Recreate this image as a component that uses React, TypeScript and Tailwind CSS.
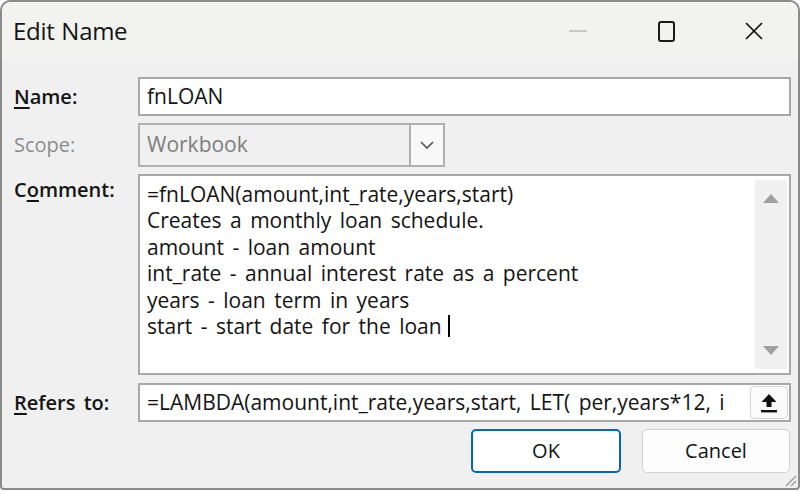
import { X } from "lucide-react"

const font = { fontFamily: '"Open Sans", "Noto Sans", sans-serif' }

const commentLines = [
    "=fnLOAN(amount,int_rate,years,start)",
    "Creates a monthly loan schedule.",
    "amount - loan amount",
    "int_rate - annual interest rate as a percent",
    "years - loan term in years",
    "start - start date for the loan",
]

export default function App() {
    return (
        <div className="w-[806px] h-[492px] bg-white overflow-hidden text-[#141414] [word-spacing:3px]" style={font}>
            <div className="w-[800px] h-[490px] bg-[#f0f0f0] border-2 border-[#8a8a8a] rounded-t-[10px] rounded-b-[4px] flex flex-col relative">
                {/* title bar */}
                <div className="h-[58px] flex items-center bg-[#f2f3ee] rounded-t-[10px]">
                    <span className="ml-[11px] text-[24px] tracking-[-0.3px] [word-spacing:1px]">Edit Name</span>
                    <div className="ml-auto flex items-center h-full">
                        <div className="w-[88px] h-full flex items-center justify-center">
                            <div className="w-[18px] h-[2px] bg-[#c8c8c8]" />
                        </div>
                        <div className="w-[88px] h-full flex items-center justify-center">
                            <div className="w-[17px] h-[21px] border-2 border-[#1a1a1a] rounded-[3px]" />
                        </div>
                        <div className="w-[88px] h-full flex items-center justify-center">
                            <X className="w-[30px] h-[30px]" strokeWidth={1.4} />
                        </div>
                    </div>
                </div>

                <div className="flex flex-col pl-[12px] pr-[7px] pt-[17px] text-[21px]">
                    {/* name */}
                    <div className="flex items-center h-[39px]">
                        <div className="w-[124px] font-semibold text-[20px]"><span className="underline underline-offset-[3px]">N</span>ame:</div>
                        <div className="flex-1 h-full bg-white border-2 border-[#a8a8a8] flex items-center pl-[7px]">fnLOAN</div>
                    </div>
                    {/* scope */}
                    <div className="flex items-center h-[44px] mt-[7px]">
                        <div className="w-[124px] text-[#8c8c8c] text-[20px]">Scope:</div>
                        <div className="w-[307px] h-full bg-[#f0f0f0] border-2 border-[#b0b0b0] flex items-center pl-[7px] text-[#7e7e7e]">
                            <span className="flex-1">Workbook</span>
                            <div className="w-[34px] h-full bg-[#f8f8f8] border-l-2 border-[#b0b0b0] flex items-center justify-center">
                                <svg width="16" height="10" viewBox="0 0 16 10"><path d="M2 2 L8 8 L14 2" fill="none" stroke="#555" strokeWidth="1.6" /></svg>
                            </div>
                        </div>
                    </div>
                    {/* comment */}
                    <div className="flex mt-[7px] h-[201px]">
                        <div className="w-[124px] font-semibold text-[20px] pt-[1px]">C<span className="underline underline-offset-[3px]">o</span>mment:</div>
                        <div className="flex-1 h-full bg-white border-2 border-[#a8a8a8] flex">
                            <div className="flex-1 pl-[7px] pt-[5px] leading-[26.4px]">
                                {commentLines.map((line, i) => (
                                    <div key={i} className="whitespace-pre flex items-center">
                                        {line}
                                        {i === commentLines.length - 1 && <span className="inline-block w-[2px] h-[22px] bg-black ml-[6px]" />}
                                    </div>
                                ))}
                            </div>
                            <div className="w-[32px] mr-[2px] my-[4px] bg-[#f0f0f0] flex flex-col items-center justify-between py-[13px]">
                                <svg width="18" height="11" viewBox="0 0 18 11"><path d="M9 1 L17 10 L1 10 Z" fill="#a0a0a0" /></svg>
                                <svg width="18" height="11" viewBox="0 0 18 11"><path d="M1 1 L17 1 L9 10 Z" fill="#a0a0a0" /></svg>
                            </div>
                        </div>
                    </div>
                    {/* refers to */}
                    <div className="flex items-center h-[39px] mt-[8px]">
                        <div className="w-[124px] font-semibold text-[20px]"><span className="underline underline-offset-[3px]">R</span>efers to:</div>
                        <div className="flex-1 h-full bg-white border-2 border-[#a8a8a8] flex items-center pl-[7px] overflow-hidden">
                            <span className="flex-1 whitespace-pre overflow-hidden">=LAMBDA(amount,int_rate,years,start, LET( per,years*12, i</span>
                            <div className="w-[38px] h-[33px] mr-[1px] ml-[4px] bg-[#fbfbfb] border border-[#d4d4d4] rounded-[4px] flex items-center justify-center shrink-0">
                                <svg width="20" height="22" viewBox="0 0 20 22">
                                    <path d="M10 2 L17.5 10 L12.5 10 L12.5 15 L7.5 15 L7.5 10 L2.5 10 Z" fill="#111" />
                                    <rect x="2" y="18" width="16" height="2.4" fill="#111" />
                                </svg>
                            </div>
                        </div>
                    </div>
                    {/* buttons */}
                    <div className="flex justify-end gap-[21px] mt-[7px] pr-[1px]">
                        <button className="w-[150px] h-[44px] bg-white border-2 border-[#0067c0] rounded-[5px] text-[20px]">OK</button>
                        <button className="w-[148px] h-[44px] bg-[#fdfdfd] border border-[#d0d0d0] rounded-[5px] text-[20px]">Cancel</button>
                    </div>
                </div>

                <svg className="absolute right-[1px] bottom-[1px]" width="14" height="14" viewBox="0 0 14 14">
                    <path d="M13 3 L3 13 M13 8 L8 13" stroke="#a0a0a0" strokeWidth="1.5" />
                </svg>
            </div>
        </div>
    )
}
